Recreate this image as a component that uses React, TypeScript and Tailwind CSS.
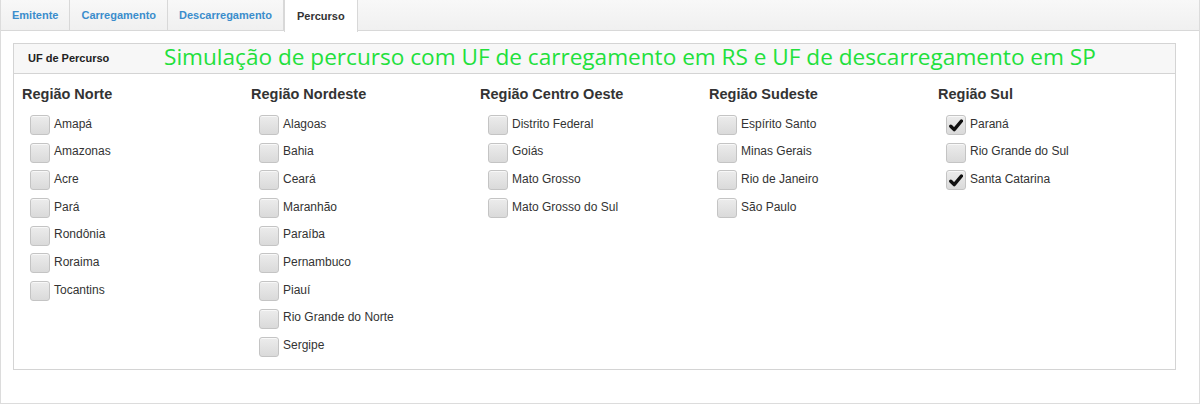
const regioes: { nome: string; ufs: { nome: string; marcado?: boolean }[] }[] = [
  {
    nome: "Região Norte",
    ufs: [
      { nome: "Amapá" },
      { nome: "Amazonas" },
      { nome: "Acre" },
      { nome: "Pará" },
      { nome: "Rondônia" },
      { nome: "Roraima" },
      { nome: "Tocantins" },
    ],
  },
  {
    nome: "Região Nordeste",
    ufs: [
      { nome: "Alagoas" },
      { nome: "Bahia" },
      { nome: "Ceará" },
      { nome: "Maranhão" },
      { nome: "Paraíba" },
      { nome: "Pernambuco" },
      { nome: "Piauí" },
      { nome: "Rio Grande do Norte" },
      { nome: "Sergipe" },
    ],
  },
  {
    nome: "Região Centro Oeste",
    ufs: [
      { nome: "Distrito Federal" },
      { nome: "Goiás" },
      { nome: "Mato Grosso" },
      { nome: "Mato Grosso do Sul" },
    ],
  },
  {
    nome: "Região Sudeste",
    ufs: [
      { nome: "Espírito Santo" },
      { nome: "Minas Gerais" },
      { nome: "Rio de Janeiro" },
      { nome: "São Paulo" },
    ],
  },
  {
    nome: "Região Sul",
    ufs: [
      { nome: "Paraná", marcado: true },
      { nome: "Rio Grande do Sul" },
      { nome: "Santa Catarina", marcado: true },
    ],
  },
];

const tabs = ["Emitente", "Carregamento", "Descarregamento", "Percurso"];

const Checkbox = ({ checked }: { checked?: boolean }) => (
  <span className="flex h-[20px] w-[20px] shrink-0 items-center justify-center rounded-[3px] border border-[#c4c4c4] bg-gradient-to-b from-[#ececec] to-[#dadada] shadow-[inset_0_1px_0_#f8f8f8]">
    {checked && (
      <svg width="14" height="13" viewBox="0 0 14 13">
        <path d="M1.8 7.2 L5.2 10.6 L12.4 2" fill="none" stroke="#111" strokeWidth="3.4" strokeLinecap="round" strokeLinejoin="round" />
      </svg>
    )}
  </span>
);

export default function App() {
  return (
    <div className="h-[406px] w-[1200px] bg-white font-['Liberation_Sans',Arial,sans-serif] text-[#333]">
      <div className="h-[404px] border-x border-b border-[#dcdcdc]">
        <ul className="flex h-[31px] border-b border-[#d8d8d8] bg-gradient-to-b from-[#f8f8f8] to-[#f0f0f0]">
          {tabs.map((t) => {
            const ativo = t === "Percurso";
            return (
              <li
                key={t}
                className={
                  ativo
                    ? "-mb-px flex h-[32px] cursor-pointer items-center border-x border-[#d8d8d8] bg-white px-[12px] text-[11px] font-bold text-[#333]"
                    : "flex h-[31px] cursor-pointer items-center border-r border-[#d8d8d8] px-[11px] text-[11px] font-bold text-[#3b8dcc]"
                }
              >
                {t}
              </li>
            );
          })}
        </ul>
        <div className="pl-[12px] pr-[23px] pt-[12px]">
          <div className="h-[327px] border border-[#d4d4d4]">
            <div className="flex h-[30px] items-center border-b border-[#d4d4d4] bg-[#f7f7f7] pl-[14px]">
              <span className="w-[136px] text-[11px] font-bold text-[#222]">UF de Percurso</span>
              <span className="-mt-[2px] font-['Open_Sans',sans-serif] text-[22.6px] leading-none text-[#22e03c]">
                Simulação de percurso com UF de carregamento em RS e UF de descarregamento em SP
              </span>
            </div>
            <div className="grid grid-cols-[229px_229px_229px_229px_229px] pl-[8px] pt-[12px]">
              {regioes.map((r) => (
                <div key={r.nome}>
                  <h4 className="mb-[13px] text-[14.5px] font-bold leading-[16px] text-[#333]">{r.nome}</h4>
                  <div className="flex flex-col gap-[7.7px] pl-[8px]">
                    {r.ufs.map((uf) => (
                      <label key={uf.nome} className="flex h-[20px] cursor-pointer items-center gap-[4px] text-[12px]">
                        <Checkbox checked={uf.marcado} />
                        <span className="-mt-[3px]">{uf.nome}</span>
                      </label>
                    ))}
                  </div>
                </div>
              ))}
            </div>
          </div>
        </div>
      </div>
    </div>
  );
}
